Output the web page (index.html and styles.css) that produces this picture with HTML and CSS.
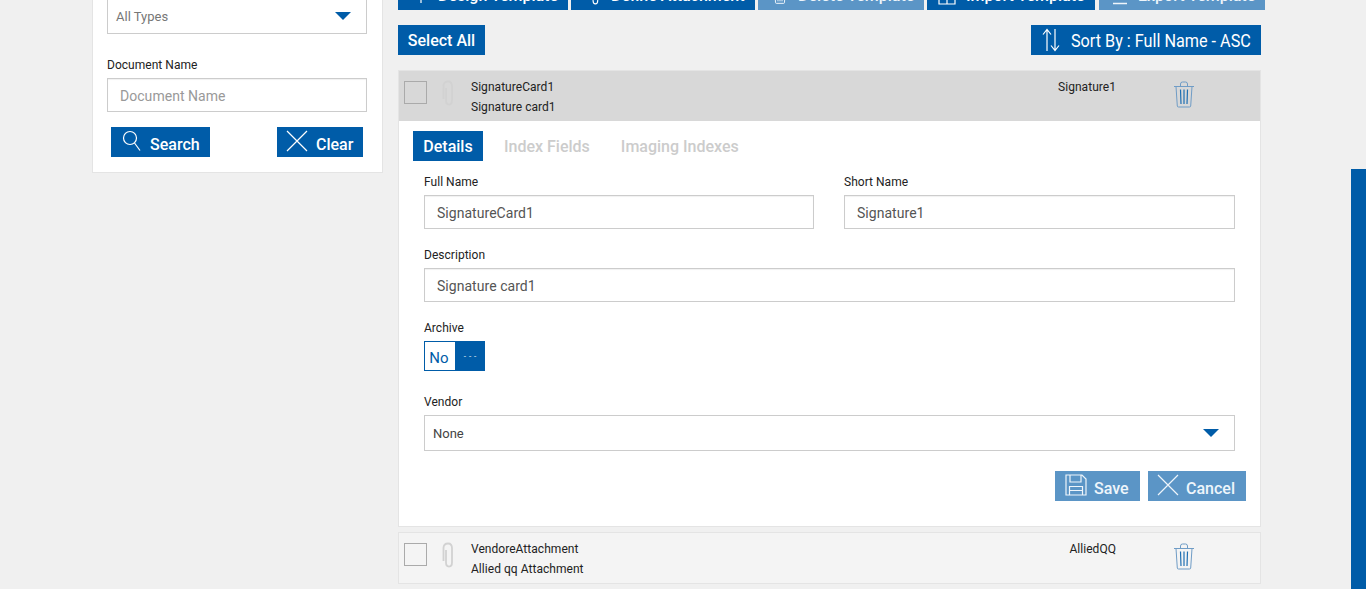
FILE: index.html
```html
<!DOCTYPE html>
<html lang="en">
<head>
<meta charset="utf-8">
<title>Document Templates</title>
<link rel="stylesheet" href="styles.css">
</head>
<body>
<svg class="defs" width="0" height="0" aria-hidden="true">
  <symbol id="i-x" viewBox="0 0 22 22"><path d="M1 1L21 21M21 1L1 21" fill="none" stroke="currentColor" stroke-width="1.2"/></symbol>
  <symbol id="i-trash" viewBox="0 0 22 27">
    <path d="M1 5.5H21M7.5 5.5V3Q7.5 1 9.500 1H12.500Q14.500 1 14.500 3V5.500M3 5.500L4.300 25Q4.400 26 5.500 26H16.500Q17.600 26 17.700 25L19 5.500" fill="none" stroke="#6f9cc6" stroke-width="1"/>
    <path d="M7.500 8.500L8 23M11 8.500V23M14.500 8.500L14 23" fill="none" stroke="#1f6fb2" stroke-width="1.200"/>
  </symbol>
  <symbol id="i-clip" viewBox="0 0 12 26"><path d="M4 8V20.500Q4 24.500 7 24.500Q10 24.500 10 20.500V6Q10 1.500 6 1.500Q1.500 1.500 1.500 6V19" fill="none" stroke="#d2d2d2" stroke-width="1.800"/></symbol>
</svg>
<div class="page">
  <aside class="filters">
    <div class="select select-filter"><span>All Types</span><i class="caret"></i></div>
    <label class="field-label filter-label">Document Name</label>
    <div class="input input-filter placeholder">Document Name</div>
    <div class="filter-actions">
      <button class="btn low btn-search"><svg class="ico" width="20" height="22" viewBox="0 0 20 22"><circle cx="8" cy="8" r="6.500" fill="none" stroke="currentColor" stroke-width="1.200"/><path d="M12.500 13L18 20.500" fill="none" stroke="currentColor" stroke-width="1.200"/></svg>Search</button>
      <button class="btn low btn-clear"><svg class="ico" width="22" height="22"><use href="#i-x"/></svg>Clear</button>
    </div>
  </aside>
  <main class="content">
    <div class="toolbar">
      <button class="btn tb tb-design"><svg class="ico" width="14" height="16" viewBox="0 0 14 16"><path d="M7 0V16M0 8H14" stroke="currentColor" stroke-width="1.200"/></svg>Design Template</button>
      <button class="btn tb tb-define"><svg class="ico" width="12" height="20" viewBox="0 0 12 26"><path d="M3.500 6V20.500Q3.500 24.500 6.500 24.500Q9.500 24.500 9.500 20.500V5Q9.500 1.500 6 1.500Q1.500 1.500 1.500 6V19" fill="none" stroke="currentColor" stroke-width="1.500"/></svg>Define Attachment</button>
      <button class="btn tb tb-delete soft"><svg class="ico" width="16" height="18" viewBox="0 0 22 27"><path d="M1 5.500H21M3 5.500L4.300 25Q4.400 26 5.500 26H16.500Q17.600 26 17.700 25L19 5.500M7.500 8.500L8 23M11 8.500V23M14.500 8.500L14 23" fill="none" stroke="currentColor" stroke-width="1.500"/></svg>Delete Template</button>
      <button class="btn tb tb-import"><svg class="ico" width="18" height="20" viewBox="0 0 18 20"><path d="M1 3H17V19H1ZM9 3V19M1 11H17" fill="none" stroke="currentColor" stroke-width="1.200"/></svg>Import Template</button>
      <button class="btn tb tb-export soft"><svg class="ico" width="16" height="20" viewBox="0 0 16 20"><path d="M8 0V14M4 10L8 14L12 10M1 18.500H15" fill="none" stroke="currentColor" stroke-width="1.300"/></svg>Export Template</button>
    </div>
    <div class="listbar">
      <button class="btn btn-select">Select All</button>
      <button class="btn btn-sort"><svg class="ico" width="18" height="24" viewBox="0 0 18 24"><path d="M5 23V2M1 6.500L5 1.500L9 6.500M13 1V22M9 17.500L13 22.500L17 17.500" fill="none" stroke="currentColor" stroke-width="1.200"/></svg><span class="sort-text">Sort By : Full Name - ASC</span></button>
    </div>
    <section class="row row-open">
      <span class="check"></span>
      <svg class="clip" width="12" height="26"><use href="#i-clip"/></svg>
      <div class="names"><div>SignatureCard1</div><div>Signature card1</div></div>
      <div class="short short-a">Signature1</div>
      <svg class="trash" width="22" height="27"><use href="#i-trash"/></svg>
    </section>
    <section class="panel">
      <nav class="tabs">
        <span class="tab tab-on">Details</span>
        <span class="tab tab-index">Index Fields</span>
        <span class="tab tab-imaging">Imaging Indexes</span>
      </nav>
      <div class="form">
        <div class="cols">
          <div><label class="field-label">Full Name</label><div class="input">SignatureCard1</div></div>
          <div><label class="field-label">Short Name</label><div class="input">Signature1</div></div>
        </div>
        <div class="group"><label class="field-label">Description</label><div class="input">Signature card1</div></div>
        <div class="group"><label class="field-label">Archive</label>
          <div class="toggle"><span class="toggle-no">No</span><span class="toggle-dots">---</span></div>
        </div>
        <div class="group group-vendor"><label class="field-label">Vendor</label>
          <div class="select select-vendor"><span>None</span><i class="caret"></i></div>
        </div>
      </div>
      <div class="panel-actions">
        <button class="btn low soft btn-save"><svg class="ico" width="22" height="22" viewBox="0 0 22 22"><path d="M1 1H17L21 5V21H1ZM5 1V8H16V1M4.500 21V12.500H17.500V21M4.500 16.500H17.500" fill="none" stroke="currentColor" stroke-width="1.200"/></svg>Save</button>
        <button class="btn low soft btn-cancel"><svg class="ico" width="22" height="22"><use href="#i-x"/></svg>Cancel</button>
      </div>
    </section>
    <section class="row row-closed">
      <span class="check"></span>
      <svg class="clip" width="12" height="26"><use href="#i-clip"/></svg>
      <div class="names"><div>VendoreAttachment</div><div>Allied qq Attachment</div></div>
      <div class="short short-b">AlliedQQ</div>
      <svg class="trash" width="22" height="27"><use href="#i-trash"/></svg>
    </section>
  </main>
</div>
<div class="scroll-bar"></div>
</body>
</html>
```
FILE: styles.css
```css
* { box-sizing: border-box; }
html, body { margin: 0; height: 589px; overflow: hidden; }
body { background: #f0f0f0; font-family: Roboto, "Liberation Sans", sans-serif; color: #333; position: relative; }
.defs { position: absolute; }
.page { display: flex; align-items: flex-start; margin-top: -20px; padding-left: 92px; }

.btn { display: inline-flex; align-items: center; height: 30px; border: 0; padding: 0; background: #005ca8; color: #fff; font: 500 16px Roboto, sans-serif; white-space: nowrap; }
.btn.soft { background: #5b95c6; color: #eef5fb; }
.ico { flex: none; display: block; }
.btn.low { padding-top: 4px; }
.btn.low .ico { margin-bottom: 6px; }

.filters { width: 291px; height: 193px; background: #fff; padding: 17px 14px 0; border: 1px solid #e4e4e4; flex: none; }
.field-label { display: block; font-size: 12px; line-height: 14px; color: #222; letter-spacing: .03px; }
.filter-label { margin-top: 24px; margin-bottom: 6px; }
.select { display: flex; align-items: center; justify-content: space-between; background: #fff; border: 1px solid #ccc; font-size: 13px; }
.select-filter { width: 260px; height: 36px; padding: 0 15px 0 8px; color: #777; font-size: 13px; }
.caret { width: 0; height: 0; border-left: 8px solid transparent; border-right: 8px solid transparent; border-top: 8px solid #005ca8; }
.input { height: 34px; border: 1px solid #ccc; background: #fff; display: flex; align-items: center; padding: 2px 12px 0; font-size: 14px; letter-spacing: .04px; color: #555; box-shadow: inset 0 1px 1px rgba(0,0,0,.06); }
.input-filter { width: 260px; }
.placeholder { color: #999; }
.filter-actions { display: flex; justify-content: space-between; width: 252px; margin: 15px 0 0 4px; }
.btn-search { width: 99px; padding-left: 11px; gap: 8px; }
.btn-clear { width: 86px; padding-left: 9px; gap: 8px; }

.content { width: 863px; margin-left: 15px; flex: none; }
.toolbar { display: flex; width: 867px; }
.tb { justify-content: flex-start; gap: 10px; }
.tb-design { width: 170px; margin-right: 3px; padding-left: 16px; }
.tb-define { width: 184px; margin-right: 3px; padding-left: 18px; }
.tb-delete { width: 166px; margin-right: 3px; padding-left: 14px; }
.tb-import { width: 168px; margin-right: 4px; padding-left: 11px; }
.tb-export { width: 166px; padding-left: 13px; }
.listbar { display: flex; justify-content: space-between; margin-top: 15px; }
.btn-select { width: 87px; justify-content: center; }
.btn-sort { width: 230px; padding-left: 11px; gap: 11px; }
.sort-text { display: block; font-size: 18px; font-weight: 400; transform: scaleX(.9); transform-origin: left center; }

.row { display: flex; position: relative; height: 52px; margin-top: 15px; border: 1px solid #e4e4e4; font-size: 12px; letter-spacing: .04px; color: #222; }
.row-open { background: #d8d8d8; height: 51px; border-bottom: 0; }
.row-closed { background: #f4f4f4; margin-top: 5px; }
.check { width: 23px; height: 23px; border: 1px solid #aaa; margin: 10px 0 0 5px; flex: none; }
.clip { margin: 9px 0 0 15px; flex: none; }
.names { margin: 6px 0 0 17px; line-height: 20px; flex: 1; }
.short { position: absolute; top: 6px; line-height: 20px; }
.short-a { right: 144px; }
.short-b { right: 144px; }
.trash { position: absolute; left: 774px; top: 10px; }

.panel { background: #fff; height: 406px; padding: 10px 14px 0; border: 1px solid #e4e4e4; border-top: 0; }
.tabs { display: flex; height: 30px; align-items: center; font-size: 16px; font-weight: 500; color: #ccc; }
.tab-on { width: 70px; height: 30px; background: #005ca8; color: #fff; display: flex; align-items: center; justify-content: center; }
.tab-index { margin-left: 21px; }
.tab-imaging { margin-left: 31px; }
.form { margin: 14px 11px 0; }
.cols { display: grid; grid-template-columns: 390px 391px; column-gap: 30px; }
.cols .field-label, .group .field-label { margin-bottom: 6px; }
.cols .field-label { height: 14px; }
.group { margin-top: 19px; }
.toggle { display: flex; width: 61px; height: 30px; }
.toggle-no { width: 31px; border: 1px solid #005ca8; border-right: 0; display: flex; align-items: center; justify-content: center; padding: 3px 2px 0 0; color: #005ca8; font-size: 15px; }
.toggle-dots { width: 30px; background: #005ca8; color: #fff; display: flex; align-items: center; justify-content: center; padding-left: 3px; letter-spacing: 3px; font-size: 8px; }
.group-vendor { margin-top: 24px; }
.select-vendor { height: 36px; padding: 0 15px 0 8px; color: #444; }
.panel-actions { display: flex; justify-content: flex-end; gap: 8px; margin-top: 20px; }
.btn-save { width: 85px; padding-left: 10px; gap: 7px; }
.btn-cancel { width: 98px; padding-left: 9px; gap: 7px; }

.scroll-bar { position: absolute; left: 1351px; top: 169px; width: 15px; height: 420px; background: #005ca8; }
```
